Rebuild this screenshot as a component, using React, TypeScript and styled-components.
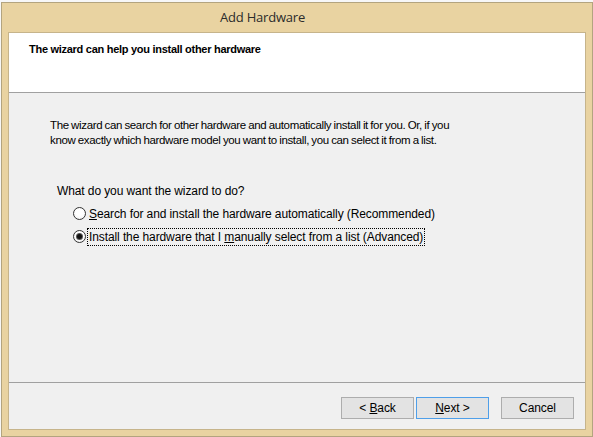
import React from "react";
import styled, { createGlobalStyle } from "styled-components";

const GlobalStyle = createGlobalStyle`
  html, body {
    margin: 0;
    padding: 0;
    background: #f5f5f5;
  }
  * { box-sizing: border-box; }
`;

const Screen = styled.div`
  position: relative;
  width: 593px;
  height: 437px;
  overflow: hidden;
  padding: 2px 0 0 1px;
  background: #f7f7f7;
`;

const Window = styled.div`
  width: 592px;
  height: 435px;
  border: 1px solid #b3a47f;
  background: #e9d3a1;
  padding: 0 6px 6px 6px;
  display: flex;
  flex-direction: column;
`;

const TitleBar = styled.div`
  height: 29px;
  display: flex;
  align-items: center;
  justify-content: center;
  padding: 0 69px 1px 0;
  font-family: "Open Sans", "Noto Sans", sans-serif;
  font-size: 13px;
  letter-spacing: -0.2px;
  color: #2b2b2b;
`;

const Client = styled.div`
  flex: 1;
  border: 1px solid #c6b48b;
  background: #f0f0f0;
  display: flex;
  flex-direction: column;
  font-family: "Liberation Sans", Arial, sans-serif;
  color: #000;
`;

const Header = styled.div`
  height: 60px;
  flex: none;
  background: #ffffff;
  border-bottom: 1px solid #a0a0a0;
  padding: 10px 0 0 20px;
  font-weight: bold;
  font-size: 11px;
  letter-spacing: -0.28px;
  line-height: 13px;
`;

const Body = styled.div`
  flex: 1;
  padding: 25px 0 0 41px;
  font-size: 12px;
  letter-spacing: -0.1px;
  line-height: 15px;
`;

const Intro = styled.p`
  margin: 0;
  width: 412px;
  font-size: 11.5px;
  letter-spacing: -0.35px;
  word-spacing: -0.5px;
`;

const Question = styled.p`
  margin: 36px 0 0 7px;
`;

const Options = styled.div`
  margin-top: 3px;
  padding-left: 23px;
  display: flex;
  flex-direction: column;
`;

const Option = styled.label`
  height: 23px;
  display: flex;
  align-items: center;
  gap: 3px;
`;

const Radio = styled.span<{ $checked?: boolean }>`
  width: 13px;
  height: 13px;
  flex: none;
  border-radius: 50%;
  border: 1px solid #333333;
  background: radial-gradient(circle at 50% 40%, #ffffff 40%, #ececec 100%);
  display: flex;
  align-items: center;
  justify-content: center;
  &::after {
    content: "";
    display: ${(p) => (p.$checked ? "block" : "none")};
    width: 5px;
    height: 5px;
    border-radius: 50%;
    background: #111111;
    box-shadow: 0 0 0 1px #555555;
  }
`;

const OptionText = styled.span<{ $focused?: boolean }>`
  padding: 1px 1px 0 0;
  margin-left: ${(p) => (p.$focused ? "-1px" : "0")};
  padding-left: ${(p) => (p.$focused ? "1px" : "0")};
  outline: ${(p) => (p.$focused ? "1px dotted #000" : "none")};
  outline-offset: 0;
  white-space: nowrap;
`;

const Footer = styled.div`
  height: 47px;
  flex: none;
  border-top: 1px solid #a0a0a0;
  display: flex;
  justify-content: flex-end;
  align-items: flex-start;
  padding: 14px 11px 0 0;
`;

const Button = styled.button<{ $default?: boolean; $gap?: number }>`
  width: 73px;
  height: 22px;
  margin-left: ${(p) => p.$gap ?? 0}px;
  border: 1px solid ${(p) => (p.$default ? "#4f9fe9" : "#adadad")};
  background: #e3e3e3;
  font-family: "Liberation Sans", Arial, sans-serif;
  font-size: 12px;
  letter-spacing: -0.1px;
  color: #000;
  padding: 0;
  display: flex;
  align-items: center;
  justify-content: center;
`;

const Key = styled.span`
  text-decoration: underline;
`;

export default function App() {
  return (
    <>
      <GlobalStyle />
      <Screen>
        <Window>
          <TitleBar>Add Hardware</TitleBar>
          <Client>
            <Header>The wizard can help you install other hardware</Header>
            <Body>
              <Intro>
                The wizard can search for other hardware and automatically install it for you. Or, if you know
                exactly which hardware model you want to install, you can select it from a list.
              </Intro>
              <Question>What do you want the wizard to do?</Question>
              <Options>
                <Option>
                  <Radio />
                  <OptionText>
                    <Key>S</Key>earch for and install the hardware automatically (Recommended)
                  </OptionText>
                </Option>
                <Option>
                  <Radio $checked />
                  <OptionText $focused>
                    Install the hardware that I <Key>m</Key>anually select from a list (Advanced)
                  </OptionText>
                </Option>
              </Options>
            </Body>
            <Footer>
              <Button>
                &lt;&nbsp;<Key>B</Key>ack
              </Button>
              <Button $default $gap={2}>
                <Key>N</Key>ext &gt;
              </Button>
              <Button $gap={12}>Cancel</Button>
            </Footer>
          </Client>
        </Window>
      </Screen>
    </>
  );
}
